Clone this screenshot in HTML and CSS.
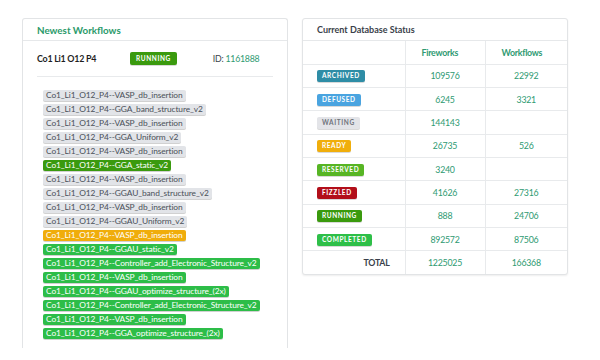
FILE: index.html
```html
<!DOCTYPE html>
<html>
<head>
<meta charset="utf-8">
<link rel="stylesheet" href="styles.css">
</head>
<body>
<div class="page">
  <section class="card wf">
    <div class="card-head green">Newest Workflows</div>
    <div class="wf-body">
      <div class="summary">
        <span class="formula">Co1 Li1 O12 P4</span>
        <span class="badge running">RUNNING</span>
        <span class="wfid">ID: <span class="num">1161888</span></span>
      </div>
      <div class="rule"></div>
      <ul class="fw-list">
        <li><span class="fw gray">Co1_Li1_O12_P4--VASP_db_insertion</span></li>
        <li><span class="fw gray">Co1_Li1_O12_P4--GGA_band_structure_v2</span></li>
        <li><span class="fw gray">Co1_Li1_O12_P4--VASP_db_insertion</span></li>
        <li><span class="fw gray">Co1_Li1_O12_P4--GGA_Uniform_v2</span></li>
        <li><span class="fw gray">Co1_Li1_O12_P4--VASP_db_insertion</span></li>
        <li><span class="fw run">Co1_Li1_O12_P4--GGA_static_v2</span></li>
        <li><span class="fw gray">Co1_Li1_O12_P4--VASP_db_insertion</span></li>
        <li><span class="fw gray">Co1_Li1_O12_P4--GGAU_band_structure_v2</span></li>
        <li><span class="fw gray">Co1_Li1_O12_P4--VASP_db_insertion</span></li>
        <li><span class="fw gray">Co1_Li1_O12_P4--GGAU_Uniform_v2</span></li>
        <li><span class="fw ready">Co1_Li1_O12_P4--VASP_db_insertion</span></li>
        <li><span class="fw done">Co1_Li1_O12_P4--GGAU_static_v2</span></li>
        <li><span class="fw done">Co1_Li1_O12_P4--Controller_add_Electronic_Structure_v2</span></li>
        <li><span class="fw done">Co1_Li1_O12_P4--VASP_db_insertion</span></li>
        <li><span class="fw done">Co1_Li1_O12_P4--GGAU_optimize_structure_(2x)</span></li>
        <li><span class="fw done">Co1_Li1_O12_P4--Controller_add_Electronic_Structure_v2</span></li>
        <li><span class="fw done">Co1_Li1_O12_P4--VASP_db_insertion</span></li>
        <li><span class="fw done">Co1_Li1_O12_P4--GGA_optimize_structure_(2x)</span></li>
      </ul>
    </div>
  </section>
  <section class="card db">
    <div class="card-head dark">Current Database Status</div>
    <table class="status">
      <thead>
        <tr><th></th><th>Fireworks</th><th>Workflows</th></tr>
      </thead>
      <tbody>
        <tr><td><span class="badge archived">ARCHIVED</span></td><td>109576</td><td>22992</td></tr>
        <tr><td><span class="badge defused">DEFUSED</span></td><td>6245</td><td>3321</td></tr>
        <tr><td><span class="badge waiting">WAITING</span></td><td>144143</td><td></td></tr>
        <tr><td><span class="badge readyb">READY</span></td><td>26735</td><td>526</td></tr>
        <tr><td><span class="badge reserved">RESERVED</span></td><td>3240</td><td></td></tr>
        <tr><td><span class="badge fizzled">FIZZLED</span></td><td>41626</td><td>27316</td></tr>
        <tr><td><span class="badge running">RUNNING</span></td><td>888</td><td>24706</td></tr>
        <tr><td><span class="badge completed">COMPLETED</span></td><td>892572</td><td>87506</td></tr>
        <tr class="total"><td>TOTAL</td><td>1225025</td><td>166368</td></tr>
      </tbody>
    </table>
  </section>
</div>
</body>
</html>
```
FILE: styles.css
```css
* { box-sizing: border-box; }
html, body { margin: 0; padding: 0; background: #fff; }
body {
  font-family: Lato, "Open Sans", sans-serif;
  color: #333;
  width: 600px;
  height: 360px;
  overflow: hidden;
}
.page {
  display: flex;
  align-items: flex-start;
  gap: 14px;
  padding: 18px 0 0 22px;
}
.card {
  width: 266px;
  background: #fff;
  border: 1px solid #e2e4e6;
  border-radius: 3px;
  box-shadow: 0 1px 2px rgba(0,0,0,0.07);
}
.wf {
  height: 330px;
  border-bottom: none;
  border-radius: 3px 3px 0 0;
  box-shadow: none;
}
.card-head {
  height: 22px;
  padding: 0 14px;
  display: flex;
  align-items: center;
  font-weight: 700;
  border-bottom: 1px solid #e6e8ea;
}
.card-head.green { color: #2a9a6a; font-size: 9.8px; }
.card-head.dark { color: #3a3f4a; font-size: 9px; }
.wf-body { padding: 0 14px; }
.summary {
  display: flex;
  align-items: center;
  height: 35px;
}
.formula {
  font-size: 8.9px;
  letter-spacing: -0.25px;
  font-weight: 700;
  color: #1e1e1e;
  width: 93px;
}
.wfid {
  margin-left: 36px;
  font-size: 8.8px;
  letter-spacing: -0.25px;
  color: #3a3f4a;
}
.num { color: #2e9a72; }
.rule {
  border-top: 1px solid #e8eaec;
  margin-bottom: 13px;
}
.fw-list {
  list-style: none;
  margin: 0;
  padding: 0 0 0 6px;
  display: flex;
  flex-direction: column;
  gap: 3px;
}
.fw-list li { display: flex; }
.fw {
  display: inline-block;
  font-size: 8.4px;
  letter-spacing: -0.1px;
  line-height: 11px;
  height: 11px;
  padding: 0 3px;
  border-radius: 2px;
  box-shadow: 0 1px 0 rgba(0,0,0,0.18);
}
.fw.gray { background: #e2e4e8; color: #4a5058; }
.fw.run { background: #3a9a0e; color: #fff; }
.fw.ready { background: #f0ad0b; color: #fff; }
.fw.done { background: #2dbd48; color: #fff; }

.badge {
  display: inline-block;
  font-size: 6.5px;
  font-weight: 700;
  letter-spacing: 0.6px;
  line-height: 12px;
  height: 12px;
  padding: 0 5px;
  border-radius: 2px;
  color: #fff;
  box-shadow: 0 1px 0 rgba(0,0,0,0.15);
}
.summary .badge { height: 13px; line-height: 13px; padding: 0 6px; }
.badge.running { background: #3a9a0e; }
.badge.archived { background: #2e8da6; }
.badge.defused { background: #4aa4e0; }
.badge.waiting { background: #e3e4e8; color: #70747c; }
.badge.readyb { background: #f0ae0c; }
.badge.reserved { background: #57b524; }
.badge.fizzled { background: #b20f1a; }
.badge.completed { background: #2ebf48; }

.status {
  width: 100%;
  border-collapse: collapse;
  font-size: 8.8px;
  letter-spacing: -0.25px;
}
.status th, .status td {
  height: 23.3px;
  border-left: 1px solid #e8eaec;
  border-top: 1px solid #e8eaec;
  padding: 0;
}
.status tr > :first-child { border-left: none; width: 102px; padding-left: 14px; }
.status tr > :nth-child(2) { width: 80px; }
.status thead th {
  border-top: none;
  color: #2e9a72;
  font-weight: 700;
  text-align: left;
  padding-left: 16px;
}
.status tbody td { text-align: center; color: #2e9a72; }
.status tbody td:first-child { text-align: left; }
.status tr.total td:first-child {
  text-align: right;
  padding-right: 15px;
  font-weight: 700;
  color: #3a3f4a;
}
```
